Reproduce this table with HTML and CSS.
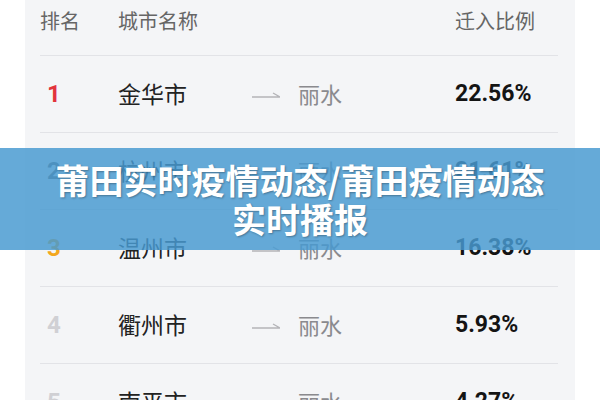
FILE: index.html
```html
<!DOCTYPE html>
<html lang="zh-CN">
  <head>
    <meta charset="UTF-8" />
    <title>莆田实时疫情动态</title>
    <link rel="stylesheet" href="styles.css">
  </head>
  <body>
    <div class="panel">
      <div class="row head">
        <span>排名</span>
        <span>城市名称</span>
        <span></span>
        <span></span>
        <span>迁入比例</span>
      </div>

      <div class="row">
        <span class="rank r1">1</span>
        <span class="city">金华市</span>
        <span class="arrow"><svg width="28" height="10" viewBox="0 0 28 10"><polyline points="0,8 28,8 21,4" fill="none" stroke="#b4b4b8" stroke-width="1.4"/></svg></span>
        <span class="dest">丽水</span>
        <span class="pct">22.56%</span>
      </div>

      <div class="row">
        <span class="rank r2">2</span>
        <span class="city">杭州市</span>
        <span class="arrow"><svg width="28" height="10" viewBox="0 0 28 10"><polyline points="0,8 28,8 21,4" fill="none" stroke="#b4b4b8" stroke-width="1.4"/></svg></span>
        <span class="dest">丽水</span>
        <span class="pct">21.61%</span>
      </div>

      <div class="row">
        <span class="rank r3">3</span>
        <span class="city">温州市</span>
        <span class="arrow"><svg width="28" height="10" viewBox="0 0 28 10"><polyline points="0,8 28,8 21,4" fill="none" stroke="#b4b4b8" stroke-width="1.4"/></svg></span>
        <span class="dest">丽水</span>
        <span class="pct">16.38%</span>
      </div>

      <div class="row">
        <span class="rank">4</span>
        <span class="city">衢州市</span>
        <span class="arrow"><svg width="28" height="10" viewBox="0 0 28 10"><polyline points="0,8 28,8 21,4" fill="none" stroke="#b4b4b8" stroke-width="1.4"/></svg></span>
        <span class="dest">丽水</span>
        <span class="pct">5.93%</span>
      </div>

      <div class="row">
        <span class="rank">5</span>
        <span class="city">南平市</span>
        <span class="arrow"><svg width="28" height="10" viewBox="0 0 28 10"><polyline points="0,8 28,8 21,4" fill="none" stroke="#b4b4b8" stroke-width="1.4"/></svg></span>
        <span class="dest">丽水</span>
        <span class="pct">4.27%</span>
      </div>
    </div>

    <div class="banner">
      <h1>莆田实时疫情动态/莆田疫情动态<br>实时播报</h1>
    </div>
  </body>
</html>
```

FILE: styles.css
```css
body {
  margin: 0;
  background: #ffffff;
  font-family: Roboto, "Noto Sans CJK SC", sans-serif;
  overflow: hidden;
  height: 400px;
}

.panel {
  margin: 0 25px;
  height: 400px;
  background: #f4f5f7;
  padding: 0 17px 0 15px;
}

.row {
  display: grid;
  grid-template-columns: 78px 134px 46px 157px 1fr;
  align-items: center;
  height: 76px;
  border-bottom: 1px solid #e2e3e7;
  font-size: 23px;
}

.row.head {
  height: 40px;
  padding-bottom: 15px;
  font-size: 20px;
  color: #666666;
}

.rank {
  padding-left: 7px;
  font-family: Roboto, sans-serif;
  font-weight: bold;
  font-size: 24px;
  color: #d0d0d4;
}

.r1 {
  color: #e2343c;
}

.r2 {
  color: #666666;
}

.r3 {
  color: #f3a81e;
}

.city {
  font-family: "Noto Sans CJK SC", sans-serif;
  color: #222222;
  margin-top: -2px;
}

.arrow svg {
  display: block;
}

.dest {
  font-family: "Noto Sans CJK SC", sans-serif;
  font-size: 22px;
  color: #8a8a8e;
  margin-top: -2px;
}

.pct {
  font-family: Roboto, sans-serif;
  font-weight: bold;
  color: #141414;
  margin-top: -2px;
}

.banner {
  position: absolute;
  top: 148px;
  left: 0;
  right: 0;
  height: 102px;
  background: rgba(72, 154, 208, 0.84);
  display: flex;
  align-items: center;
  justify-content: center;
}

.banner h1 {
  margin: 0;
  font-family: "Noto Sans CJK SC", sans-serif;
  font-size: 34px;
  line-height: 39px;
  font-weight: bold;
  color: #ffffff;
  text-align: center;
  text-shadow: 1px 1px 2px rgba(0, 0, 0, 0.3);
}
```
